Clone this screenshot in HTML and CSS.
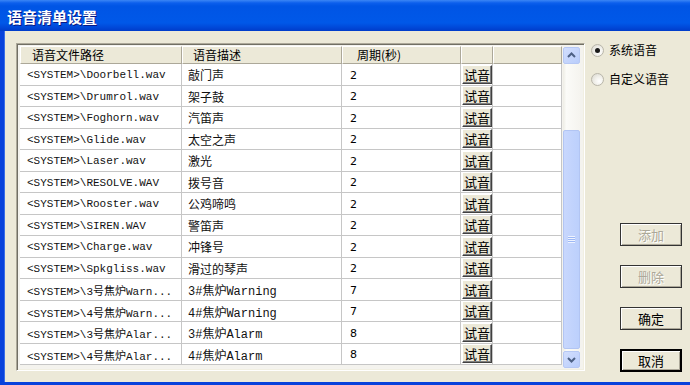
FILE: index.html
```html
<!DOCTYPE html>
<html lang="zh">
<head>
    <meta charset="UTF-8">
    <title>语音清单设置</title>
    <link rel="stylesheet" href="styles.css">
</head>
<body>
    <div class="window">
        <div class="titlebar"><span class="title">语音清单设置</span></div>
        <div class="client">
            <div class="list-frame">
                <div class="grid">
                    <div class="row head">
                        <div class="hd hd-path">语音文件路径</div>
                        <div class="hd hd-desc">语音描述</div>
                        <div class="hd hd-period">周期(秒)</div>
                        <div class="hd"></div>
                        <div class="hd"></div>
                    </div>
                    <div class="row"><div class="c path">&lt;SYSTEM&gt;\Doorbell.wav</div><div class="c desc">敲门声</div><div class="c num">2</div><div class="c act"><button class="try">试音</button></div><div class="c"></div></div>
                    <div class="row"><div class="c path">&lt;SYSTEM&gt;\Drumrol.wav</div><div class="c desc">架子鼓</div><div class="c num">2</div><div class="c act"><button class="try">试音</button></div><div class="c"></div></div>
                    <div class="row"><div class="c path">&lt;SYSTEM&gt;\Foghorn.wav</div><div class="c desc">汽笛声</div><div class="c num">2</div><div class="c act"><button class="try">试音</button></div><div class="c"></div></div>
                    <div class="row"><div class="c path">&lt;SYSTEM&gt;\Glide.wav</div><div class="c desc">太空之声</div><div class="c num">2</div><div class="c act"><button class="try">试音</button></div><div class="c"></div></div>
                    <div class="row"><div class="c path">&lt;SYSTEM&gt;\Laser.wav</div><div class="c desc">激光</div><div class="c num">2</div><div class="c act"><button class="try">试音</button></div><div class="c"></div></div>
                    <div class="row"><div class="c path">&lt;SYSTEM&gt;\RESOLVE.WAV</div><div class="c desc">拨号音</div><div class="c num">2</div><div class="c act"><button class="try">试音</button></div><div class="c"></div></div>
                    <div class="row"><div class="c path">&lt;SYSTEM&gt;\Rooster.wav</div><div class="c desc">公鸡啼鸣</div><div class="c num">2</div><div class="c act"><button class="try">试音</button></div><div class="c"></div></div>
                    <div class="row"><div class="c path">&lt;SYSTEM&gt;\SIREN.WAV</div><div class="c desc">警笛声</div><div class="c num">2</div><div class="c act"><button class="try">试音</button></div><div class="c"></div></div>
                    <div class="row"><div class="c path">&lt;SYSTEM&gt;\Charge.wav</div><div class="c desc">冲锋号</div><div class="c num">2</div><div class="c act"><button class="try">试音</button></div><div class="c"></div></div>
                    <div class="row"><div class="c path">&lt;SYSTEM&gt;\Spkgliss.wav</div><div class="c desc">滑过的琴声</div><div class="c num">2</div><div class="c act"><button class="try">试音</button></div><div class="c"></div></div>
                    <div class="row"><div class="c path">&lt;SYSTEM&gt;\3号焦炉Warn...</div><div class="c desc">3#焦炉Warning</div><div class="c num">7</div><div class="c act"><button class="try">试音</button></div><div class="c"></div></div>
                    <div class="row"><div class="c path">&lt;SYSTEM&gt;\4号焦炉Warn...</div><div class="c desc">4#焦炉Warning</div><div class="c num">7</div><div class="c act"><button class="try">试音</button></div><div class="c"></div></div>
                    <div class="row"><div class="c path">&lt;SYSTEM&gt;\3号焦炉Alar...</div><div class="c desc">3#焦炉Alarm</div><div class="c num">8</div><div class="c act"><button class="try">试音</button></div><div class="c"></div></div>
                    <div class="row"><div class="c path">&lt;SYSTEM&gt;\4号焦炉Alar...</div><div class="c desc">4#焦炉Alarm</div><div class="c num">8</div><div class="c act"><button class="try">试音</button></div><div class="c"></div></div>
                </div>
                <div class="vscroll">
                    <div class="sb-btn">
                        <svg width="15" height="15" viewBox="0 0 15 15"><path d="M4 9 L7.5 5.5 L11 9" fill="none" stroke="#4d6185" stroke-width="2"/></svg>
                    </div>
                    <div class="sb-track">
                        <div class="sb-thumb"><span class="grip"></span></div>
                    </div>
                    <div class="sb-btn">
                        <svg width="15" height="15" viewBox="0 0 15 15"><path d="M4 6 L7.5 9.5 L11 6" fill="none" stroke="#4d6185" stroke-width="2"/></svg>
                    </div>
                </div>
            </div>
            <div class="side">
                <label class="radio"><span class="dot checked"></span>系统语音</label>
                <label class="radio"><span class="dot"></span>自定义语音</label>
                <div class="buttons">
                    <button class="btn" disabled>添加</button>
                    <button class="btn" disabled>删除</button>
                    <button class="btn">确定</button>
                    <button class="btn default">取消</button>
                </div>
            </div>
        </div>
    </div>
</body>
</html>
```

FILE: styles.css
```css
* {
    box-sizing: border-box;
    margin: 0;
    padding: 0;
}

body {
    width: 690px;
    height: 385px;
    overflow: hidden;
    background-color: #ece9d8;
    font-family: "Noto Sans CJK SC", sans-serif;
    font-size: 12px;
    color: #000;
}

.window {
    width: 690px;
    height: 385px;
    display: flex;
    flex-direction: column;
}

.titlebar {
    height: 31px;
    flex-shrink: 0;
    display: flex;
    align-items: center;
    padding-left: 7px;
    background: linear-gradient(#3b86f5 0, #0c5fec 3px, #0055e5 6px, #0058e8 23px, #0046d6 28px, #003cc9 31px);
}

.title {
    color: #fff;
    font-weight: bold;
    font-size: 15px;
    line-height: 1;
    margin-top: 1px;
    text-shadow: 1px 1px #0a1883;
}

.client {
    flex: 1;
    display: flex;
    padding: 12px 0 0 12px;
    border-left: 4px solid #0842dc;
    border-bottom: 3px solid #0842dc;
    box-shadow: inset 1px 0 #3a6ee8;
}

.list-frame {
    width: 569px;
    height: 328px;
    display: flex;
    align-items: flex-start;
    padding: 1px 3px 0 2px;
    background-color: #f4f3ee;
    border: 1px solid;
    border-color: #aca899 #fff #fff #aca899;
    box-shadow: inset 1px 1px #716f64, inset -1px -1px #f1efe2;
}

.grid {
    width: 542px;
    margin-top: 1px;
    margin-left: 1px;
}

.row {
    display: grid;
    grid-template-columns: 162px 160px 119px 32px 69px;
    height: 21.5px;
    background-color: #fff;
}

.row.head {
    height: 18px;
    background-color: #ece9d8;
}

.hd {
    line-height: 16px;
    border-top: 1px solid #fff;
    border-left: 1px solid #fff;
    border-right: 1px solid #aca899;
    border-bottom: 1px solid #aca899;
    white-space: nowrap;
    overflow: hidden;
}

.hd-path {
    padding-left: 11px;
}

.hd-desc {
    padding-left: 10px;
}

.hd-period {
    padding-left: 14px;
}

.c {
    display: flex;
    align-items: center;
    padding-top: 2px;
    border-right: 1px solid #c6c6c6;
    border-bottom: 1px solid #c6c6c6;
    white-space: nowrap;
    overflow: hidden;
}

.path {
    padding-left: 7px;
    font-family: "Liberation Mono", "Noto Sans CJK SC", monospace;
    font-size: 11px;
    color: #111;
}

.desc {
    padding-left: 6px;
    font-family: "Liberation Mono", "Noto Sans CJK SC", monospace;
    font-size: 12px;
    color: #111;
}

.num {
    padding-left: 8px;
    font-family: "DejaVu Sans", sans-serif;
    font-size: 11px;
}

.act {
    padding-left: 1px;
    padding-top: 0;
}

.try {
    width: 31px;
    height: 19px;
    font-family: "Noto Sans CJK SC", sans-serif;
    font-size: 13px;
    line-height: 15px;
    color: #000;
    background-color: #ece9d8;
    border: 1px solid;
    border-color: #fff #404040 #404040 #fff;
    box-shadow: inset -1px -1px #808080;
}

.vscroll {
    width: 17px;
    height: 321px;
    margin-top: 2px;
    margin-left: 1px;
    display: flex;
    flex-direction: column;
    background-color: #f7f6f1;
}

.sb-btn {
    height: 17px;
    flex-shrink: 0;
    display: flex;
    align-items: center;
    justify-content: center;
    background: linear-gradient(135deg, #d2defd, #b9cdfb);
    border: 1px solid #b6c8f4;
    border-radius: 2px;
}

.sb-track {
    flex: 1;
    padding: 66px 0 2px;
    background: linear-gradient(90deg, #eeede5, #fbfbf8 20%, #f5f4ef);
}

.sb-thumb {
    height: 100%;
    display: flex;
    align-items: center;
    justify-content: center;
    background: linear-gradient(90deg, #c8d7fd, #bcd0fc);
    border: 1px solid #b2c5f3;
    border-radius: 2px;
}

.grip {
    width: 7px;
    height: 7px;
    background: repeating-linear-gradient(#eef3fe 0 1px, #9db8f5 1px 2px);
}

.side {
    margin-left: 6px;
    display: flex;
    flex-direction: column;
}

.radio {
    display: flex;
    align-items: center;
    gap: 5px;
    height: 14px;
    line-height: 14px;
    white-space: nowrap;
}

.radio + .radio {
    margin-top: 15px;
}

.dot {
    width: 13px;
    height: 13px;
    border-radius: 50%;
    border: 1px solid #b9b6aa;
    background: radial-gradient(circle at 65% 65%, #fff 0, #f2f1ec 40%, #d8d6cc 100%);
    display: flex;
    align-items: center;
    justify-content: center;
}

.dot.checked::after {
    content: "";
    width: 5px;
    height: 5px;
    border-radius: 50%;
    background-color: #1a1a1a;
}

.buttons {
    display: flex;
    flex-direction: column;
    gap: 19px;
    margin-top: 137px;
    margin-left: 29px;
}

.btn {
    width: 62px;
    height: 23px;
    font-family: "Noto Sans CJK SC", sans-serif;
    font-size: 13px;
    color: #000;
    background-color: #ece9d8;
    border: 1px solid #333;
    box-shadow: inset 1px 1px #fff, inset -1px -1px #aca899;
}

.btn:disabled {
    color: #aca899;
    text-shadow: 1px 1px #fff;
}

.btn.default {
    border: 2px solid #000;
}
```
